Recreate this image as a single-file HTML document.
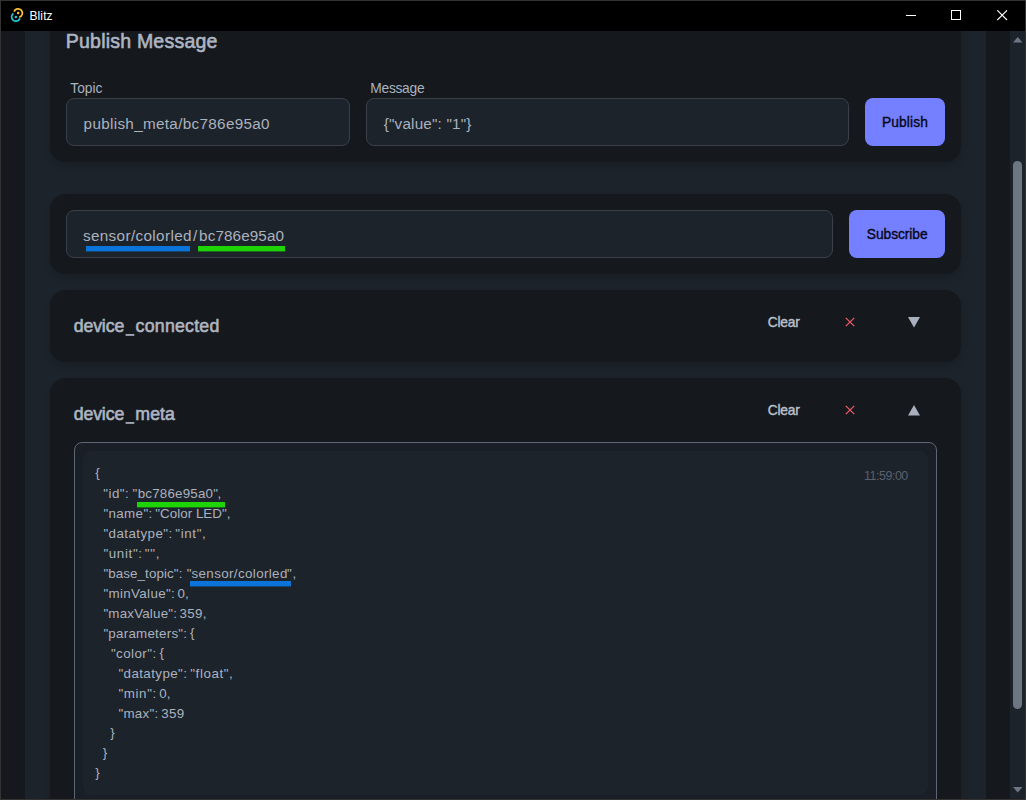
<!DOCTYPE html>
<html>
<head>
<meta charset="utf-8">
<title>Blitz</title>
<style>
*{box-sizing:border-box;margin:0;padding:0}
html,body{width:1026px;height:800px;overflow:hidden;background:#333;}
body{font-family:"Liberation Sans",sans-serif;color:#abb2bf;position:relative;-webkit-font-smoothing:antialiased}
.abs{position:absolute}
#win{left:1px;top:1px;width:1024px;height:798px;background:#15191e;overflow:hidden}
#tb{left:0;top:0;width:1024px;height:30px;background:#000}
#page{left:0;top:30px;width:1009px;height:768px;background:#15191e;overflow:hidden}
#cont{left:24px;top:0;width:961px;height:768px;background:#1d232a}
.card{left:25px;width:911px;background:#15191e;border-radius:16px;box-shadow:0 5px 8px -1px rgba(0,0,0,.1),0 2px 4px -2px rgba(0,0,0,.1)}
#sb{left:1009px;top:30px;width:15px;height:768px;background:#1d232a}
#thumb{left:3px;top:130px;width:9px;height:548px;border-radius:4.5px;background:#6e7684}
.t{position:absolute;white-space:pre;line-height:1}
.inp{position:absolute;background:#1d232a;border:1px solid #3a414a;border-radius:8px;height:48px}
.btn{position:absolute;background:#7480ff;border-radius:8px;height:48px;color:#050617;font-weight:bold;font-size:14px}
.h{font-weight:normal}
.ul{position:absolute;height:6px}
.blue{background:linear-gradient(#0b74da,#0b74da) top/100% 5px no-repeat,linear-gradient(rgba(11,116,218,.4),rgba(11,116,218,.4)) bottom/100% 1px no-repeat}
.green{background:linear-gradient(#1fd406,#1fd406) top/100% 5px no-repeat,linear-gradient(rgba(31,212,6,.4),rgba(31,212,6,.4)) bottom/100% 1px no-repeat}
</style>
</head>
<body>
<div id="win" class="abs">
  <div id="page" class="abs">
    <div id="cont" class="abs">
      <!-- card 1 : Publish Message -->
      <div class="card abs" style="top:-40px;height:171px"></div>
      <div class="inp" style="left:41px;top:67px;width:284px"></div>
      <div class="inp" style="left:341px;top:67px;width:483px"></div>
      <div class="btn" style="left:840px;top:67px;width:80px"></div>

      <!-- card 2 : subscribe -->
      <div class="card abs" style="top:163px;height:80px"></div>
      <div class="inp" style="left:41px;top:179px;width:767px"></div>
      <div class="btn" style="left:824px;top:179px;width:96px"></div>

      <!-- card 3 : device_connected -->
      <div class="card abs" style="top:259px;height:72px"></div>
      <svg class="abs" style="left:819px;top:285px" width="12" height="12" viewBox="0 0 12 12"><path d="M1.8 1.9 L10.3 10.1 M10.3 1.9 L1.8 10.1" stroke="#f65a6e" stroke-width="1.2" fill="none"/></svg>
      <svg class="abs" style="left:883px;top:286px" width="12" height="11" viewBox="0 0 12 11"><path d="M0 0 H12 L6 10.6 Z" fill="#a9b0be"/></svg>

      <!-- card 4 : device_meta -->
      <div class="card abs" style="top:347px;height:600px"></div>
      <svg class="abs" style="left:819px;top:373px" width="12" height="12" viewBox="0 0 12 12"><path d="M1.8 1.9 L10.3 10.1 M10.3 1.9 L1.8 10.1" stroke="#f65a6e" stroke-width="1.2" fill="none"/></svg>
      <svg class="abs" style="left:883px;top:374px" width="12" height="11" viewBox="0 0 12 11"><path d="M0 10.6 H12 L6 0 Z" fill="#a9b0be"/></svg>

      <div class="abs" id="mbox" style="left:49px;top:411px;width:863px;height:500px;border:1px solid #5f6673;border-radius:8px;background:#1a1e26"></div>
      <div class="abs" id="mblk" style="left:58px;top:420px;width:845px;height:344px;border-radius:8px;background:#1d232a">
        </div>
    </div>
  </div>
  <div id="sb" class="abs">
    <svg class="abs" style="left:2.5px;top:6px" width="10" height="6" viewBox="0 0 10 6"><path d="M0 5.5 L4.75 0 L9.5 5.5 Z" fill="#6e7684"/></svg>
    <div id="thumb" class="abs"></div>
    <svg class="abs" style="left:2.5px;top:756px" width="10" height="6" viewBox="0 0 10 6"><path d="M0 0 L4.75 5.5 L9.5 0 Z" fill="#6e7684"/></svg>
  </div>
  <div id="tb" class="abs">
    <svg class="abs" style="left:9px;top:6px" width="16" height="16" viewBox="0 0 16 16">
      <circle cx="8.1" cy="6.1" r="1.25" fill="#ffc131"/>
      <circle cx="5.9" cy="9.9" r="1.25" fill="#24c8db"/>
      <path d="M4.06 4.63 A4.3 4.3 0 1 1 9.21 10.25" fill="none" stroke="#ffc131" stroke-width="1.7"/>
      <path d="M9.94 11.37 A4.3 4.3 0 1 1 3.43 6.38" fill="none" stroke="#24c8db" stroke-width="1.7"/>
    </svg>
    <svg class="abs" style="left:905px;top:9px" width="11" height="11" viewBox="0 0 11 11"><path d="M0 5.5 H10" stroke="#fff" stroke-width="1"/></svg>
    <svg class="abs" style="left:950px;top:9px" width="11" height="11" viewBox="0 0 11 11"><rect x="0.5" y="0.5" width="9" height="9" fill="none" stroke="#fff" stroke-width="1"/></svg>
    <svg class="abs" style="left:996px;top:9px" width="11" height="11" viewBox="0 0 11 11"><path d="M0.3 0.3 L10 10 M10 0.3 L0.3 10" stroke="#fff" stroke-width="1.1"/></svg>
  </div>
</div>
<div id="txt" class="abs" style="left:0;top:0;width:1026px;height:800px;overflow:hidden">
<div class="t h" id="t_pm" style="left:65.75px;top:32.00px;font-size:19.56px;letter-spacing:0.200px;color:#aeb5c2;-webkit-text-stroke:0.6px #aeb5c2">Publish Message</div>
<div class="t" id="t_topic" style="left:70.35px;top:82.00px;font-size:13.79px;letter-spacing:-0.025px">Topic</div>
<div class="t" id="t_msg" style="left:370.30px;top:82.00px;font-size:13.79px;letter-spacing:-0.275px">Message</div>
<div class="t" id="t_in1" style="left:83.60px;top:116.00px;font-size:15.28px;letter-spacing:0.314px">publish_meta/bc786e95a0</div>
<div class="t" id="t_in2" style="left:383.75px;top:116.00px;font-size:15.28px;letter-spacing:0.173px">{"value": "1"}</div>
<div class="t" id="t_pub" style="left:882.00px;top:116.00px;font-size:13.79px;letter-spacing:0.117px;color:#050617;-webkit-text-stroke:0.35px #050617">Publish</div>
<div class="t" id="t_in3a" style="left:82.90px;top:228.00px;font-size:15.28px;letter-spacing:0.364px">sensor/colorled</div>
<div class="t" id="t_in3b" style="left:192.88px;top:228.00px;font-size:15.28px;letter-spacing:0.000px">/</div>
<div class="t" id="t_in3c" style="left:199.10px;top:228.00px;font-size:15.28px;letter-spacing:0.100px">bc786e95a0</div>
<div class="t" id="t_sub" style="left:866.80px;top:228.00px;font-size:13.79px;letter-spacing:-0.062px;color:#050617;-webkit-text-stroke:0.35px #050617">Subscribe</div>
<div class="t h" id="t_dc" style="left:73.70px;top:318.00px;font-size:17.73px;letter-spacing:-0.130px;color:#aeb5c2;-webkit-text-stroke:0.6px #aeb5c2">device</div>
<div class="t h" id="t_dc2" style="left:135.60px;top:318.00px;font-size:17.73px;letter-spacing:0.238px;color:#aeb5c2;-webkit-text-stroke:0.6px #aeb5c2">connected</div>
<div class="t h" id="t_cl1" style="left:767.70px;top:316.00px;font-size:13.79px;letter-spacing:-0.175px;color:#bac0cb;-webkit-text-stroke:0.4px #bac0cb">Clear</div>
<div class="t h" id="t_dm" style="left:73.70px;top:406.00px;font-size:17.73px;letter-spacing:-0.130px;color:#aeb5c2;-webkit-text-stroke:0.6px #aeb5c2">device</div>
<div class="t h" id="t_dm2" style="left:135.35px;top:406.00px;font-size:17.73px;letter-spacing:0.067px;color:#aeb5c2;-webkit-text-stroke:0.6px #aeb5c2">meta</div>
<div class="t h" id="t_cl2" style="left:767.70px;top:404.00px;font-size:13.79px;letter-spacing:-0.175px;color:#bac0cb;-webkit-text-stroke:0.4px #bac0cb">Clear</div>
<div class="t" id="t_ts" style="left:864.10px;top:470.00px;font-size:12.48px;letter-spacing:-0.493px;color:#59606d">11:59:00</div>
<div class="t" id="t_ttl" style="left:29.40px;top:10.00px;font-size:12.0px;letter-spacing:0.138px;color:#fff">Blitz</div>
<div class="t j" id="j0_0" style="left:95.25px;top:466.00px;font-size:13.37px;letter-spacing:0.000px">{</div>
<div class="t j" id="j1_0" style="left:103.30px;top:487.00px;font-size:13.37px;letter-spacing:0.450px">"id":</div>
<div class="t j" id="j1_1" style="left:132.57px;top:487.00px;font-size:13.37px;letter-spacing:0.000px">"</div>
<div class="t j" id="j1_2" style="left:137.65px;top:487.00px;font-size:13.37px;letter-spacing:0.206px">bc786e95a0</div>
<div class="t j" id="j1_3" style="left:213.20px;top:487.00px;font-size:13.37px;letter-spacing:-0.350px">",</div>
<div class="t j" id="j2_0" style="left:103.40px;top:507.00px;font-size:13.37px;letter-spacing:0.367px">"name":</div>
<div class="t j" id="j2_1" style="left:155.30px;top:507.00px;font-size:13.37px;letter-spacing:0.032px">"Color LED",</div>
<div class="t j" id="j3_0" style="left:103.40px;top:527.00px;font-size:13.37px;letter-spacing:0.435px">"datatype":</div>
<div class="t j" id="j3_1" style="left:175.30px;top:527.00px;font-size:13.37px;letter-spacing:0.630px">"int",</div>
<div class="t j" id="j4_0" style="left:103.40px;top:547.00px;font-size:13.37px;letter-spacing:0.650px">"unit":</div>
<div class="t j" id="j4_1" style="left:144.80px;top:547.00px;font-size:13.37px;letter-spacing:0.700px">"",</div>
<div class="t j" id="j5_0" style="left:103.40px;top:567.00px;font-size:13.37px;letter-spacing:0.096px">"base_topic":</div>
<div class="t j" id="j5_1" style="left:186.68px;top:567.00px;font-size:13.37px;letter-spacing:0.000px">"</div>
<div class="t j" id="j5_2" style="left:191.50px;top:567.00px;font-size:13.37px;letter-spacing:0.375px">sensor/colorled</div>
<div class="t j" id="j5_3" style="left:287.00px;top:567.00px;font-size:13.37px;letter-spacing:0.750px">",</div>
<div class="t j" id="j6_0" style="left:103.40px;top:587.00px;font-size:13.37px;letter-spacing:0.345px">"minValue":</div>
<div class="t j" id="j6_1" style="left:177.40px;top:587.00px;font-size:13.37px;letter-spacing:0.200px">0,</div>
<div class="t j" id="j7_0" style="left:103.40px;top:607.00px;font-size:13.37px;letter-spacing:0.190px">"maxValue":</div>
<div class="t j" id="j7_1" style="left:179.50px;top:607.00px;font-size:13.37px;letter-spacing:0.283px">359,</div>
<div class="t j" id="j8_0" style="left:103.40px;top:627.00px;font-size:13.37px;letter-spacing:0.242px">"parameters":</div>
<div class="t j" id="j8_1" style="left:190.00px;top:626.00px;font-size:13.37px;letter-spacing:0.000px">{</div>
<div class="t j" id="j9_0" style="left:110.90px;top:647.00px;font-size:13.37px;letter-spacing:0.443px">"color":</div>
<div class="t j" id="j9_1" style="left:159.60px;top:646.00px;font-size:13.37px;letter-spacing:0.000px">{</div>
<div class="t j" id="j10_0" style="left:118.40px;top:667.00px;font-size:13.37px;letter-spacing:0.415px">"datatype":</div>
<div class="t j" id="j10_1" style="left:190.30px;top:667.00px;font-size:13.37px;letter-spacing:0.564px">"float",</div>
<div class="t j" id="j11_0" style="left:118.40px;top:687.00px;font-size:13.37px;letter-spacing:0.620px">"min":</div>
<div class="t j" id="j11_1" style="left:159.20px;top:687.00px;font-size:13.37px;letter-spacing:0.100px">0,</div>
<div class="t j" id="j12_0" style="left:118.40px;top:707.00px;font-size:13.37px;letter-spacing:0.290px">"max":</div>
<div class="t j" id="j12_1" style="left:161.30px;top:707.00px;font-size:13.37px;letter-spacing:0.325px">359</div>
<div class="t j" id="j13_0" style="left:110.30px;top:726.00px;font-size:13.37px;letter-spacing:0.000px">}</div>
<div class="t j" id="j14_0" style="left:102.80px;top:746.00px;font-size:13.37px;letter-spacing:0.000px">}</div>
<div class="t j" id="j15_0" style="left:95.25px;top:766.00px;font-size:13.37px;letter-spacing:0.000px">}</div>
<svg class="abs" style="left:120px;top:330px" width="20" height="10"><rect x="5.6" y="4.1" width="8.7" height="1.7" fill="#aeb5c2"/></svg>
<svg class="abs" style="left:120px;top:418px" width="20" height="10"><rect x="5.6" y="4.1" width="8.7" height="1.7" fill="#aeb5c2"/></svg>
<div class="ul blue" style="left:86px;top:246px;width:104px"></div>
<div class="ul green" style="left:198px;top:246px;width:87px"></div>
<div class="ul green" style="left:137px;top:502px;width:88px"></div>
<div class="ul blue" style="left:190px;top:581px;width:101px"></div>
</div>
</body>
</html>
